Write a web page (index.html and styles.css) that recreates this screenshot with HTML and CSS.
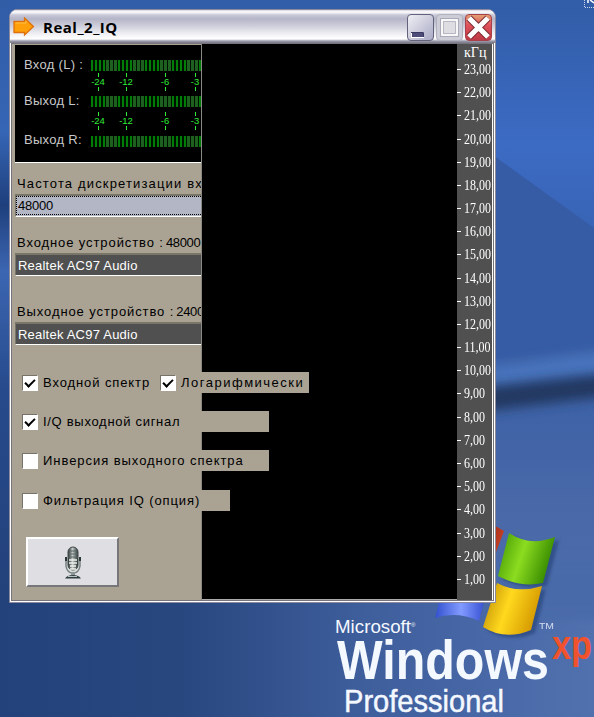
FILE: index.html
```html
<!DOCTYPE html>
<html lang="ru">
<head>
<meta charset="utf-8">
<title>Real_2_IQ</title>
<link rel="stylesheet" href="styles.css">
</head>
<body>
<svg class="wallpaper" viewBox="0 0 594 717" aria-hidden="true">
  <defs>
    <linearGradient id="sky" x1="0" y1="0" x2="0" y2="1">
      <stop offset="0" stop-color="#315ca6"/><stop offset=".2" stop-color="#3c6bc4"/>
      <stop offset=".45" stop-color="#355da5"/><stop offset=".7" stop-color="#4868a8"/>
      <stop offset="1" stop-color="#5270ae"/>
    </linearGradient>
    <linearGradient id="left" x1="0" y1="0" x2="1" y2="0">
      <stop offset="0" stop-color="#23417a"/><stop offset=".3" stop-color="#28477f"/>
      <stop offset=".6" stop-color="#3d5d9b"/><stop offset=".85" stop-color="#4a69a8"/><stop offset="1" stop-color="#5171ae"/>
    </linearGradient>
    <linearGradient id="edge" x1="0" y1="0" x2="0" y2="1">
      <stop offset="0" stop-color="#315ca6"/><stop offset=".22" stop-color="#3565b5"/>
      <stop offset=".34" stop-color="#1f3f7c"/><stop offset=".45" stop-color="#3c66b2"/>
      <stop offset=".65" stop-color="#264a8b"/><stop offset="1" stop-color="#23417a"/>
    </linearGradient>
    <linearGradient id="red" x1="0" y1="0" x2="1" y2="1"><stop stop-color="#9c2c18"/><stop offset="1" stop-color="#d8482a"/></linearGradient>
    <linearGradient id="green" x1="0" y1="0" x2="1" y2=".3"><stop stop-color="#3d9300"/><stop offset=".5" stop-color="#8cdc20"/><stop offset="1" stop-color="#398c00"/></linearGradient>
    <linearGradient id="blue" x1="0" y1="0" x2="1" y2="0"><stop stop-color="#3250ce"/><stop offset=".5" stop-color="#829bff"/><stop offset="1" stop-color="#3049cf"/></linearGradient>
    <linearGradient id="gold" x1="0" y1="0" x2="1" y2=".3"><stop stop-color="#b78300"/><stop offset=".5" stop-color="#ffd91e"/><stop offset="1" stop-color="#d69a00"/></linearGradient>
    <filter id="soft" x="-20%" y="-50%" width="140%" height="200%"><feGaussianBlur stdDeviation="6"/></filter>
    <filter id="shade" x="-20%" y="-20%" width="140%" height="140%"><feGaussianBlur stdDeviation="1.6"/></filter>
  </defs>
  <rect width="594" height="717" fill="url(#sky)"/>
  <path d="M490 153 594 228V348L490 360Z" fill="#365ca5"/>
  <path d="M470 370 610 351V372L470 390Z" fill="#4a74bd" filter="url(#soft)"/>
  <path d="M470 389 610 374V396L470 413Z" fill="#203760" filter="url(#soft)"/>
  <rect y="600" width="594" height="117" fill="url(#left)"/>
  <rect x="490" y="560" width="120" height="60" fill="#4a6aa9" filter="url(#soft)"/>
  <rect width="10" height="603" fill="url(#edge)"/>
  <g transform="translate(4 3)" fill="#243f76" opacity=".6" filter="url(#shade)">
    <path d="M509 533Q530 547 555 537L543 583Q521 588 498 576ZM497 583Q518 594 542 586L531 630Q505 641 483 627Z"/>
  </g>
  <path d="M490 523 504 531 493 560Z" fill="url(#red)"/>
  <path d="M509 533Q530 547 555 537L543 583Q521 588 498 576Z" fill="url(#green)"/>
  <path d="M442 590H487L479 621Q457 611 435 618Z" fill="url(#blue)"/>
  <path d="M497 583Q518 594 542 586L531 630Q505 641 483 627Z" fill="url(#gold)"/>
  <g class="brand">
    <text x="335" y="633" font-size="18.500" textLength="76" lengthAdjust="spacingAndGlyphs">Microsoft</text>
    <text x="411" y="627" font-size="6">®</text>
    <text class="brand-main" x="337" y="679" font-size="56" textLength="212" lengthAdjust="spacingAndGlyphs">Windows</text>
    <text x="344" y="712" font-size="32" textLength="160" lengthAdjust="spacingAndGlyphs" stroke="#f4f8ff" stroke-width=".5">Professional</text>
    <text x="539" y="629" font-size="9" textLength="15" lengthAdjust="spacingAndGlyphs" opacity=".8">TM</text>
    <text class="brand-xp" x="552" y="659" font-size="41" textLength="40" lengthAdjust="spacingAndGlyphs">xp</text>
  </g>
  <path d="M584.500 0V7.500H594" fill="none" stroke="#cbd5e9" stroke-dasharray="1 1"/>
  <path d="M588 0V3M590 0 594 3" fill="none" stroke="#fff" stroke-width="1.500"/>
</svg>

<main class="window">
  <header class="titlebar">
    <svg class="app-icon" width="22" height="20" viewBox="0 0 22 20"><path d="M1 4.500H11.500V1L20.500 9.500 11.500 18V15.500H1Z" fill="#ff9f0a" stroke="#df700b" stroke-width="1.300"/><path d="M2.500 6H13V4" fill="none" stroke="#ffc247"/></svg>
    <h1>Real_2_IQ</h1>
    <div class="caption-buttons">
      <span class="cap cap-min"><svg width="25" height="25" viewBox="0 0 25 25"><rect x="3.500" y="17.500" width="12" height="5" fill="#4d4c79" stroke="#fff"/><path d="M3 17.500H15.500V22" fill="none" stroke="#393861"/></svg></span>
      <span class="cap cap-max"><svg width="25" height="25" viewBox="0 0 25 25"><rect x="3.500" y="3.500" width="18" height="18" fill="#dddde2" stroke="#aaaab8"/><path d="M5 20V5H20V20Z" fill="none" stroke="#fff" stroke-width="1.500"/><path d="M6.500 19V6.500H18.500V18.500H6.500" fill="none" stroke="#b7b7c3"/></svg></span>
      <span class="cap cap-close"><svg width="25" height="25" viewBox="0 0 25 25"><path d="M3 3 22 22M22 3 3 22" stroke="#7b2831" stroke-width="7"/><path d="M3 3 22 22M22 3 3 22" stroke="#fff" stroke-width="5.200"/></svg></span>
    </div>
  </header>
  <div class="client">
    <section class="controls">
      <div class="meters">
        <div class="meter"><span>Вход (L) :</span><i class="bar"></i></div>
        <div class="ticks"><b>-24</b><b>-12</b><b>-6</b><b>-3</b></div>
        <div class="meter"><span>Выход L:</span><i class="bar"></i></div>
        <div class="ticks ticks-low"><b>-24</b><b>-12</b><b>-6</b><b>-3</b></div>
        <div class="meter meter-r"><span>Выход R:</span><i class="bar"></i></div>
      </div>
      <div class="field rate"><label>Частота дискретизации вх</label><div class="combo focused"><span>48000</span></div></div>
      <div class="field input-device"><label>Входное устройство <em>: 48000</em></label><div class="combo">Realtek AC97 Audio</div></div>
      <div class="field output-device"><label>Выходное устройство <em>: 2400</em></label><div class="combo">Realtek AC97 Audio</div></div>
      <div class="options">
        <div class="option-row">
          <div class="check check-spectrum"><i class="box on"></i><span>Входной спектр</span></div>
          <div class="check check-log"><i class="box on"></i><span>Логарифмически</span></div>
        </div>
        <div class="check check-iq"><i class="box on"></i><span>I/Q выходной сигнал</span></div>
        <div class="check check-inv"><i class="box"></i><span>Инверсия выходного спектра</span></div>
        <div class="check check-filter"><i class="box"></i><span>Фильтрация IQ (опция)</span></div>
      </div>
      <div class="mic-button">
        <svg width="18" height="33" viewBox="0 0 18 33">
          <defs><linearGradient id="metal"><stop stop-color="#222b2c"/><stop offset=".45" stop-color="#c3cac6"/><stop offset="1" stop-color="#263233"/></linearGradient></defs>
          <path d="M2 13V20Q3 27 9 27T16 20V13" fill="#d7dcd9" stroke="#788181" stroke-width="1.500"/>
          <rect x="4" y="1" width="10" height="23" rx="5" fill="url(#metal)" stroke="#414949"/>
          <path d="M5 5H13M4 8H14M4 11H14" stroke="#596464"/>
          <path d="M1 11H3V15H1ZM15 11H17V15H15Z" fill="#2d3838"/>
          <path d="M5 14H13M5 17H13M6 20H12M6 23H12" stroke="#eef2ed" stroke-width="1.700"/>
          <path d="M9 26V29" stroke="#8c9695" stroke-width="4"/><path d="M1 32.500Q3 29 9 29T17 32.500Z" fill="#2e3e40"/><path d="M4 30.500H13" stroke="#b7c3c1"/>
        </svg>
      </div>
    </section>
    <section class="spectrum"></section>
    <section class="scale">
      <div class="unit">кГц</div>
      <div class="mark"><span>23,00</span></div><div class="mark"><span>22,00</span></div><div class="mark"><span>21,00</span></div><div class="mark"><span>20,00</span></div><div class="mark"><span>19,00</span></div><div class="mark"><span>18,00</span></div><div class="mark"><span>17,00</span></div><div class="mark"><span>16,00</span></div><div class="mark"><span>15,00</span></div><div class="mark"><span>14,00</span></div><div class="mark"><span>13,00</span></div><div class="mark"><span>12,00</span></div><div class="mark"><span>11,00</span></div><div class="mark"><span>10,00</span></div><div class="mark"><span>9,00</span></div><div class="mark"><span>8,00</span></div><div class="mark"><span>7,00</span></div><div class="mark"><span>6,00</span></div><div class="mark"><span>5,00</span></div><div class="mark"><span>4,00</span></div><div class="mark"><span>3,00</span></div><div class="mark"><span>2,00</span></div><div class="mark"><span>1,00</span></div>
    </section>
  </div>
</main>
</body>
</html>
```
FILE: styles.css
```css
* { box-sizing: border-box; }
body { margin: 0; width: 594px; height: 717px; overflow: hidden; padding: 9px 0 0 9px; font-family: "Liberation Sans", Arial, sans-serif; font-size: 13px; color: #000; }
.wallpaper { position: absolute; inset: 0; z-index: -1; width: 594px; height: 717px; }
.brand { fill: #f4f8ff; font-family: "Liberation Sans", Arial, sans-serif; }
.brand-main { font-weight: bold; }
.brand-xp { fill: #f0522d; font-weight: bold; }

.window { width: 487px; height: 594px; border: 1px solid #8b8a9d; border-radius: 8px 8px 0 0; background: #fff; padding: 0 1px 1px; overflow: hidden; }
.titlebar { height: 33px; margin: 0 -1px; display: flex; align-items: center; padding: 2px 3px 0 3px; background: linear-gradient(#d5d4e1 0, #fff 2px, #c7c7d8 5px, #b5b5c9 9px, #cacad8 15px, #f4f4f7 25px, #fff 29px, #9c9cae 31px, #777785 33px); }
.app-icon { width: 22px; height: 20px; margin-top: -2px; }
.titlebar h1 { margin: -1px 0 0 8px; font: bold 15px/20px "Open Sans", "Noto Sans", sans-serif; letter-spacing: .5px; }
.caption-buttons { margin-left: auto; display: flex; gap: 2px; }
.cap { width: 27px; height: 27px; border: 1px solid #62627d; border-radius: 4px; background: linear-gradient(135deg, #efeff4, #aaaac6); overflow: hidden; }
.cap svg { display: block; }
.cap-max { border-color: #b0b0bf; background: #cdcdd7; }
.cap-close { border-color: #a74149; background: linear-gradient(#e2a070, #e0525c 40%, #bd3a46); }
.client { display: flex; height: 558px; border: 1px solid #77747d; border-right: 0; }
.controls { position: relative; z-index: 1; width: 190px; flex: none; background: #aaa394; border-right: 1px solid #8c8a85; display: flex; flex-direction: column; }
.spectrum { width: 255px; flex: none; background: #000; border-bottom: 1px solid #aaa; }
.scale { flex: 1; min-width: 0; background: #505050; color: #fff; font-family: "Liberation Serif", serif; border-right: 1px solid #77747d; box-shadow: inset -1px 0 #fff; }

.meters { height: 118px; margin: 1px 0 0 3px; padding-top: 11px; background: #000; border-bottom: 1px solid #fff; color: #c8c8c8; overflow: hidden; }
.meter { display: flex; height: 18px; line-height: 18px; align-items: center; padding-left: 9px; }
.meter span { width: 67px; flex: none; white-space: nowrap; font-size: 13px; letter-spacing: .3px; }
.meter-r span { margin-top: -3px; }
.bar { width: 110px; height: 11px; background: repeating-linear-gradient(90deg, #007d06 0 2px, #001000 2px 4px, #007d06 4px 6px, #001000 6px 8px, #007d06 8px 10px, #001000 10px 12px, #007d06 12px 14px, #001000 14px 15px, #1d6020 15px 18px, #001000 18px 19px, #1d6020 19px 22px, #001000 22px 23px, #1d6020 23px 26px, #001000 26px 27px); }
.ticks { display: grid; grid-template-columns: 26px 30px 48px 12px; height: 18px; margin-left: 70px; align-items: center; }
.ticks b { display: flex; flex-direction: column; align-items: center; justify-content: space-between; height: 18px; margin-top: -3px; font: 9.500px/9px "Liberation Sans", sans-serif; color: #2fec36; }
.ticks b::before, .ticks b::after { content: ""; width: 1px; height: 4px; background: #2fec36; }
.ticks-low { height: 22px; }
.ticks-low b { margin-top: -1px; }

.field label { display: block; height: 20px; line-height: 20px; padding-left: 5px; white-space: nowrap; overflow: hidden; letter-spacing: .9px; }
.rate label { letter-spacing: 1.150px; }
.field em { font-style: normal; letter-spacing: -.35px; }
.combo { height: 23px; margin-left: 3px; border: 1px solid #797569; border-width: 2px 0 1px 1px; border-bottom-color: #fff; background: #505050; color: #fff; line-height: 21px; padding-left: 2px; letter-spacing: .22px; }
.focused { color: #000; background: #b2b6c5; padding: 0; letter-spacing: -.2px; }
.focused span { display: block; height: 19px; border: 1px dotted #000; border-right: 0; line-height: 18px; padding-left: 1px; }
.rate { margin-top: 11px; }
.input-device { margin-top: 16px; }
.output-device { margin-top: 26px; }

.options { display: flex; flex-direction: column; gap: 18px; margin-top: 27px; padding-left: 10px; }
.option-row { display: flex; }
.check { display: flex; align-items: center; height: 21px; flex: none; background: #aaa394; white-space: nowrap; letter-spacing: .9px; }
.check-spectrum { width: 138px; }
.check-log { width: 149px; letter-spacing: 1.500px; }
.check-iq { letter-spacing: .7px; }
.check-inv { letter-spacing: .95px; }
.check-iq, .check-inv { width: 247px; }
.check-filter { width: 208px; margin-top: 1px; }
.box { width: 16px; height: 16px; margin-right: 5px; flex: none; background: #fff; border: 1px solid #fff; border-top-color: #777267; border-left-color: #777267; display: grid; place-items: center; }
.on::after { content: ""; width: 8px; height: 4px; border: solid #000; border-width: 0 0 2px 2px; transform: translateY(-1px) rotate(-45deg); }
.mic-button { width: 93px; height: 50px; margin: 26px 0 0 14px; border: 2px solid #fff; border-right-color: #77777b; border-bottom-color: #77777b; background: #dedee3; display: grid; place-items: center; }
.mic-button svg { display: block; }

.unit { height: 14px; line-height: 17px; font-size: 14px; padding-left: 7px; }
.mark { height: 23.180px; display: flex; align-items: center; gap: 3px; font-size: 15px; }
.mark::before { content: ""; width: 4px; flex: none; height: 1px; background: #fff; }
.mark span { flex: none; transform: scaleX(.8); transform-origin: left; }
```
